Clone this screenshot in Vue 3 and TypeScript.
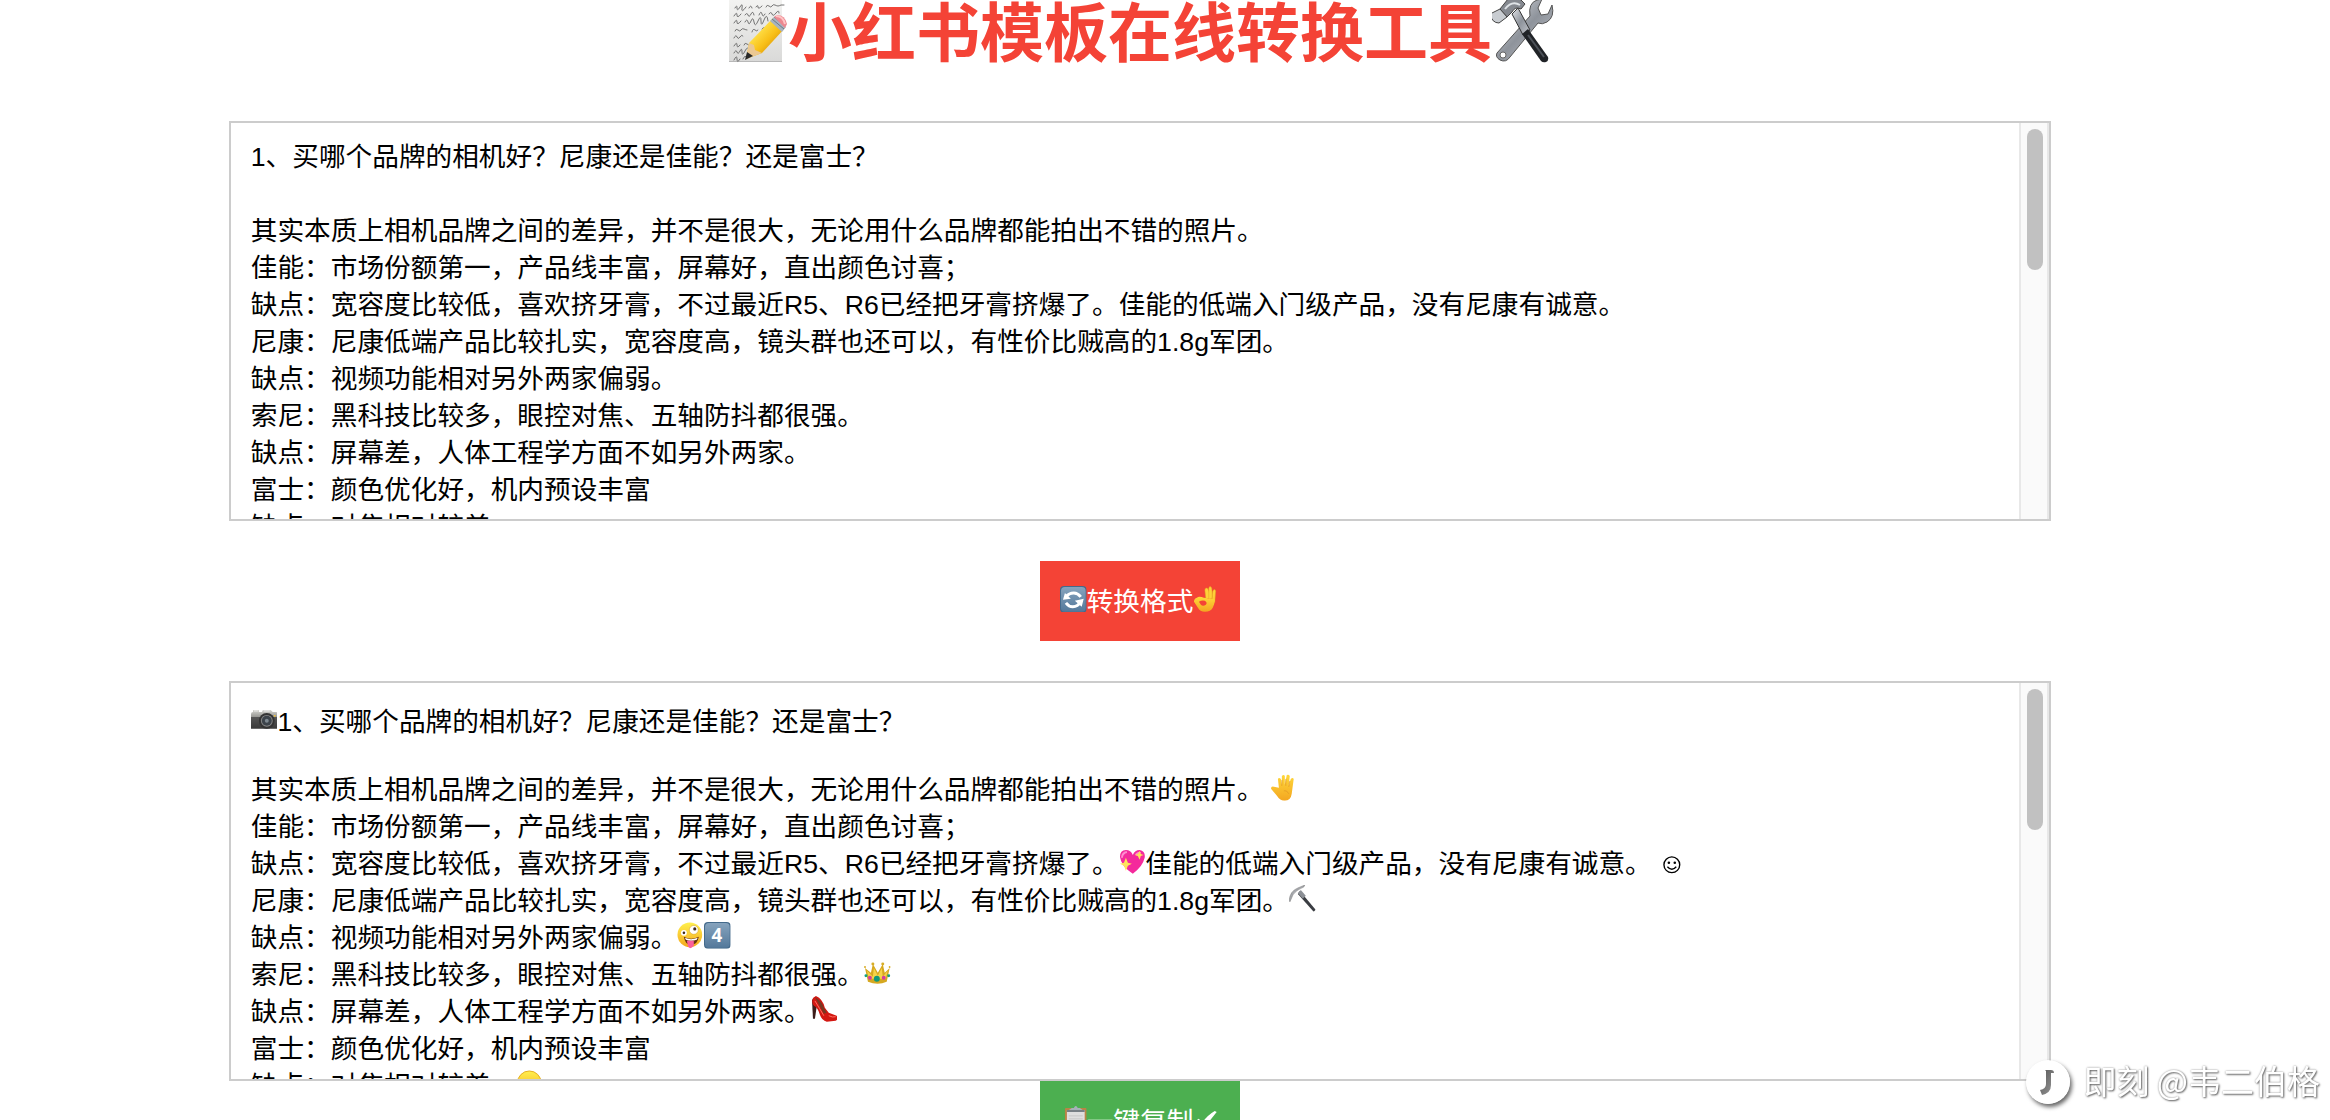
<script setup lang="ts">
import { computed, ref } from 'vue'

interface Part {
  icon: boolean
  value: string
}

const source = ref(
  [
    '1、买哪个品牌的相机好？尼康还是佳能？还是富士？',
    '',
    '其实本质上相机品牌之间的差异，并不是很大，无论用什么品牌都能拍出不错的照片。',
    '佳能：市场份额第一，产品线丰富，屏幕好，直出颜色讨喜；',
    '缺点：宽容度比较低，喜欢挤牙膏，不过最近R5、R6已经把牙膏挤爆了。佳能的低端入门级产品，没有尼康有诚意。',
    '尼康：尼康低端产品比较扎实，宽容度高，镜头群也还可以，有性价比贼高的1.8g军团。',
    '缺点：视频功能相对另外两家偏弱。',
    '索尼：黑科技比较多，眼控对焦、五轴防抖都很强。',
    '缺点：屏幕差，人体工程学方面不如另外两家。',
    '富士：颜色优化好，机内预设丰富',
    '缺点：对焦相对较差。',
  ].join('\n'),
)

const converted = ref([
  '[camera]1、买哪个品牌的相机好？尼康还是佳能？还是富士？',
  '',
  '其实本质上相机品牌之间的差异，并不是很大，无论用什么品牌都能拍出不错的照片。 [hand]',
  '佳能：市场份额第一，产品线丰富，屏幕好，直出颜色讨喜；',
  '缺点：宽容度比较低，喜欢挤牙膏，不过最近R5、R6已经把牙膏挤爆了。[heart]佳能的低端入门级产品，没有尼康有诚意。 [smile]',
  '尼康：尼康低端产品比较扎实，宽容度高，镜头群也还可以，有性价比贼高的1.8g军团。[pick]',
  '缺点：视频功能相对另外两家偏弱。[zany][four]',
  '索尼：黑科技比较多，眼控对焦、五轴防抖都很强。[crown]',
  '缺点：屏幕差，人体工程学方面不如另外两家。[heel]',
  '富士：颜色优化好，机内预设丰富',
  '缺点：对焦相对较差。[face]',
])

const lines = computed<Part[][]>(() =>
  converted.value.map((line) =>
    line
      .split(/(\[[a-z]+\])/)
      .filter((s) => s !== '')
      .map((s) => (/^\[[a-z]+\]$/.test(s) ? { icon: true, value: s.slice(1, -1) } : { icon: false, value: s })),
  ),
)

const marks = ['hand', 'heart', 'pick', 'zany', 'crown', 'heel', 'face']

function convert() {
  let n = 0
  converted.value = source.value
    .split('\n')
    .map((line) => (line.endsWith('。') ? `${line}[${marks[n++ % marks.length]}]` : line))
}

function copy() {
  const text = converted.value.join('\n').replace(/\[[a-z]+\]/g, '')
  navigator.clipboard?.writeText(text)
}
</script>

<template>
  <svg class="defs" aria-hidden="true">
    <defs>
      <linearGradient id="gKey" x1="0" y1="0" x2="0" y2="1">
        <stop offset="0" stop-color="#86a3bd" /><stop offset="1" stop-color="#54799b" />
      </linearGradient>
      <linearGradient id="gFace" x1="0" y1="0" x2="0" y2="1">
        <stop offset="0" stop-color="#fff04e" /><stop offset="1" stop-color="#f5a91c" />
      </linearGradient>
      <linearGradient id="gHand" x1="0" y1="0" x2="0" y2="1">
        <stop offset="0" stop-color="#ffd83a" /><stop offset="1" stop-color="#f3a621" />
      </linearGradient>
      <linearGradient id="gSteel" x1="0" y1="0" x2="1" y2="1">
        <stop offset="0" stop-color="#e4e6ea" /><stop offset="0.5" stop-color="#8e939b" /><stop offset="1" stop-color="#c4c7cd" />
      </linearGradient>
      <linearGradient id="gPencil" x1="0" y1="0" x2="1" y2="1">
        <stop offset="0.3" stop-color="#ffe14a" /><stop offset="0.55" stop-color="#f8bf17" /><stop offset="0.8" stop-color="#d08a08" />
      </linearGradient>
      <linearGradient id="gPaper" x1="0" y1="0" x2="0" y2="1">
        <stop offset="0" stop-color="#f4f4f2" /><stop offset="1" stop-color="#d9d9d8" />
      </linearGradient>
      <linearGradient id="gCamera" x1="0" y1="0" x2="0" y2="1">
        <stop offset="0" stop-color="#d6d6d1" /><stop offset="0.35" stop-color="#9a9a96" /><stop offset="0.4" stop-color="#555" /><stop offset="1" stop-color="#3a3a3a" />
      </linearGradient>
      <linearGradient id="gNote" x1="0" y1="0" x2="1" y2="1">
        <stop offset="0" stop-color="#555" /><stop offset="1" stop-color="#999" />
      </linearGradient>
    </defs>

    <symbol id="memo" viewBox="0 0 64 64">
      <path d="M5-2H58V62H5Z" fill="url(#gPaper)" />
      <path d="M5 61H58V62H5Z" fill="#b8b8b8" />
      <g fill="none" stroke="#666" stroke-width="0.9" stroke-linecap="round">
        <path d="M11 8q2-4 2 0t3-1 2 1 4-1m3 1q2-4 3 0m4-1q2-3 2 0t4-1m4 1q1-3 3-1t3 0 3-1 3 1 3-1h3" />
        <path d="M10 16q3-5 3-1t4-1m4 1q2-3 3 0t3-1 3 1m5 0q2-5 3-1t3 0m4 0q2-3 3 0t4-1 3 0" />
        <path d="M10 23q3-5 3-1t4-1m4 1q2-4 3 0t3-1 3 1 4-1 3 0 3-1 4 1m4 0q2-4 4 0" />
        <path d="M11 31q1-3 3-1t3 0 3-1 3 1m5 2q1-4 3-2t3 0m4-1q2-3 4 0" />
        <path d="M10 38q2-4 3-1t3 0 3-1" />
        <path d="M10 46q3-5 3-1t3 0m4 0q1-3 3-1t3 0 3-1" />
        <path d="M10 53q2-4 3-1t3-1 2 1 3-1 4 0" />
        <path d="M10 60q3-6 3-1t3 0m3 0q2-5 4-1" />
      </g>
      <path d="M22 59L25 43 49 18 61 28 38 53Z" fill="url(#gPencil)" />
      <path d="M22 59L25 43l5 2 1 5 7 3Z" fill="#ebc893" />
      <path d="M21 60l2-8 6 4Z" fill="#292929" />
      <path d="M46 21l4-4 12 10-4 5Z" fill="#a7b3bf" />
      <path d="M48 19l12 10M50 17l11 9" stroke="#6c7987" stroke-width="1" />
      <path d="M50 17l3-2q8 0 10 9l-2 4Z" fill="#ec8890" />
      <path d="M52 16q7 0 9 8" stroke="#ffc3c4" stroke-width="2" fill="none" />
    </symbol>

    <symbol id="tools" viewBox="0 0 64 64">
      <path d="M5 53L38 16Q36 3 45 0l5-1-4 9 3 7 7-1 4-9q3 12-5 17-5 3-9 1L18 57Q14 63 8 60 3 57 5 53Z" fill="url(#gSteel)" stroke="#555" stroke-width="1" />
      <circle cx="11" cy="55" r="3" fill="#fff" stroke="#666" />
      <path d="M20 14L26 8 38 30 31 35Z" fill="url(#gSteel)" stroke="#333" stroke-width="1" />
      <path d="M30 34l6-5 20 28q1 4-2 5-3 1-5-1Z" fill="#202327" />
      <path d="M36 35l16 22" stroke="#4c5158" stroke-width="2" />
      <path d="M8 9L16-1q9-5 17 5l-4 5q-6-3-9 3l-5 5Z" fill="#858990" stroke="#444" stroke-width="1" />
      <path d="M-2 14L8 9l7 8-8 6q-7 0-9-9Z" fill="#c8ccd1" stroke="#444" stroke-width="1" />
      <path d="M13 9q7-9 15-4" stroke="#dfe3e7" stroke-width="2" fill="none" />
    </symbol>

    <symbol id="refresh" viewBox="0 0 27 27">
      <rect width="27" height="27" rx="4" fill="#446a8b" />
      <rect x="1" y="1" width="25" height="25" rx="4" fill="url(#gKey)" />
      <path d="M6 11Q9 7 14 7q4 0 7 4M21 16q-3 5-8 5-4 0-7-4" fill="none" stroke="#fff" stroke-width="3" />
      <path d="M3 14l2-7 6 6ZM24 13l-2 8-7-6Z" fill="#fff" />
    </symbol>

    <symbol id="ok" viewBox="0 0 27 27">
      <path d="M13 13L12 4q0-2 2-2 1 0 2 3l2 7" fill="#ffd23a" stroke="#e0a020" stroke-width=".5" />
      <path d="M16 13L16 2q1-3 3 0l1 11M19 14l1-9q2-3 3 0l-1 12" fill="#ffd23a" stroke="#e0a020" stroke-width=".5" />
      <path d="M4 12q2-2 7 0l7 1 4 1q0 5-2 8-2 4-8 4-5 0-7-4L1 16q0-3 3-4Z" fill="url(#gHand)" />
      <path d="M6 16q3-2 6-1 3 2 1 4-3 2-5 0Z" fill="#f44336" />
    </symbol>

    <symbol id="camera" viewBox="0 0 27 27">
      <path d="M0 8q0-2 2-2V4h6v2h3l1-2h8l2 2h4l1 2v15H0Z" fill="url(#gCamera)" />
      <circle cx="16" cy="15" r="8" fill="#333" />
      <circle cx="16" cy="15" r="6" fill="#888" />
      <circle cx="16" cy="15" r="5" fill="#3c434a" />
      <circle cx="16" cy="15" r="2" fill="#7e8991" />
      <circle cx="24" cy="10" r="1" fill="#f2c033" />
      <path d="M3 5h4M13 5h6" stroke="#eee" />
    </symbol>

    <symbol id="hand" viewBox="0 0 27 27">
      <path d="M8 14L7 5q1-2 3 0l1 6 0-9q2-2 3 0v9l2-10q2-1 3 1l-1 10 2-7q2-2 3 0l-2 15q-1 7-7 7-5 0-8-5l-6-7q0-3 3-2Z" fill="url(#gHand)" />
      <path d="M11 6v6M15 5v7M19 7l-1 6M13 17q3-1 5 3" stroke="#df9423" fill="none" stroke-width=".7" />
    </symbol>

    <symbol id="heart" viewBox="0 0 27 27">
      <path d="M14 26Q2 18 1 9 1 2 7 2q5 0 7 5 2-5 7-5 6 1 5 8-2 9-12 16Z" fill="#f42a9c" />
      <path d="M3 10q0-5 5-6M17 7q2-3 5-2" stroke="#ff8bd0" stroke-width="2" fill="none" />
      <path d="M7 10l2 5 4 1-4 2-2 5-2-5-4-2 4-1ZM21 3l1 3 3 1-3 1-1 4-2-4-3-1 3-1Z" fill="#ffe45b" />
    </symbol>

    <symbol id="smile" viewBox="0 0 27 27">
      <circle cx="13" cy="17" r="8" fill="none" stroke="#000" stroke-width="1.4" />
      <circle cx="10" cy="15" r="1.3" /><circle cx="16" cy="15" r="1.3" />
      <path d="M8.500 19q4.500 5 9 0" fill="none" stroke="#000" stroke-width="1.4" />
    </symbol>

    <symbol id="pick" viewBox="0 0 27 27">
      <path d="M11 6L27 25l-2 2L9 9Z" fill="#3a3d42" />
      <path d="M9 8l3-3 5 6-3 3Z" fill="#8c9096" />
      <path d="M0 16Q1 6 9 3l7-3-1 2Q7 5 4 10L1 17Z" fill="#a5a8ad" stroke="#777" stroke-width=".5" />
    </symbol>

    <symbol id="zany" viewBox="0 0 27 27">
      <circle cx="13" cy="13" r="12.500" fill="url(#gFace)" />
      <path d="M7 15q7 4 15 0-1 8-8 8-6 0-7-8Z" fill="#6b3510" />
      <path d="M8 16q6 3 13 0l-1 2q-6 2-11 0Z" fill="#fff" />
      <path d="M10 19h7v5q-4 5-6 0Z" fill="#fb5f9b" />
      <circle cx="7" cy="11" r="3" fill="#fff" /><circle cx="7" cy="11" r="1.300" fill="#402a1a" />
      <circle cx="17" cy="8" r="4.500" fill="#fff" stroke="#d39b25" stroke-width=".5" /><circle cx="18" cy="7" r="1.600" fill="#402a1a" />
    </symbol>

    <symbol id="four" viewBox="0 0 27 27">
      <rect width="27" height="27" rx="4" fill="#446a8b" />
      <rect x="1" y="1" width="25" height="25" rx="4" fill="url(#gKey)" />
      <text x="13" y="20" text-anchor="middle" font-family="Open Sans, sans-serif" font-size="19" font-weight="700" fill="#fff">4</text>
    </symbol>

    <symbol id="crown" viewBox="0 0 27 27">
      <path d="M4 23L1 9l6 5 2-9 5 9 5-9 2 9 5-5-3 14q-9 4-19 0Z" fill="#d6a820" />
      <path d="M5 20L3 12l6 6 1-9 4 8 4-8 1 9 5-6-2 8" fill="#f6d348" />
      <circle cx="1" cy="8" r="1" fill="#d8ad27" /><circle cx="9" cy="5" r="1.500" fill="#d8ad27" /><circle cx="19" cy="5" r="1.500" fill="#d8ad27" /><circle cx="26" cy="8" r="1" fill="#d8ad27" />
      <circle cx="13" cy="20" r="3" fill="#10987a" />
      <circle cx="6" cy="19" r="2" fill="#d53b9d" /><circle cx="20" cy="19" r="2" fill="#d53b9d" />
      <circle cx="2" cy="17" r="1.500" fill="#15a07d" /><circle cx="25" cy="17" r="1.500" fill="#15a07d" />
    </symbol>

    <symbol id="heel" viewBox="0 0 27 27">
      <path d="M1 4L4 1l2 8-2 14H2Z" fill="#3d1d1a" />
      <path d="M2 2l3-2q7 3 9 12l4 5 8 3q2 4-1 5l-9 1q-5-1-7-7Q7 12 3 10 0 7 2 2Z" fill="#d31812" />
      <path d="M4 1q7 4 9 11l3 5-3 1Q8 9 4 1Z" fill="#7a3721" />
      <path d="M4 5q5 8 9 15M18 20q4 2 7 1" stroke="#ff7162" fill="none" />
    </symbol>

    <symbol id="face" viewBox="0 0 27 27">
      <circle cx="12.500" cy="13" r="12" fill="url(#gFace)" stroke="#e6ae22" />
      <path d="M8 12v3M17 12v3M8 20q5 3 9 0" stroke="#6b3510" stroke-width="2" fill="none" />
    </symbol>

    <symbol id="clipboard" viewBox="0 0 27 27">
      <rect x="5" y="2" width="22" height="26" rx="1" fill="#b88445" />
      <path d="M7 4h18v23H7Z" fill="#dedede" />
      <path d="M7 4h18v2H7Z" fill="#777f85" />
      <path d="M9 4l3-2h2q2-4 4 0h2l3 2Z" fill="#a6b1b8" />
      <path d="M9 10h14M9 13h14" stroke="#c6c6c6" />
    </symbol>

    <symbol id="check" viewBox="0 0 27 27">
      <path d="M1 16l5-3 3 4Q15 9 22 5l2 1Q17 14 11 24H7Z" fill="#fff" />
    </symbol>
  </svg>

  <main class="page">
    <h1 class="title">
      <svg class="emoji"><use href="#memo" /></svg><span>小红书模板在线转换工具</span><svg class="emoji"><use href="#tools" /></svg>
    </h1>

    <div class="box">
      <textarea v-model="source" class="field" aria-label="原文" spellcheck="false"></textarea>
      <div class="track"><div class="thumb"></div></div>
    </div>

    <button type="button" class="btn convert" @click="convert">
      <svg class="emoji"><use href="#refresh" /></svg><span>转换格式</span><svg class="emoji"><use href="#ok" /></svg>
    </button>

    <div class="box">
      <output class="field result" aria-label="转换结果">
        <span v-for="(line, i) in lines" :key="i" class="line">
          <template v-for="(part, j) in line" :key="j"><svg v-if="part.icon" class="emoji"><use :href="'#' + part.value" /></svg><template v-else>{{ part.value }}</template></template>
        </span>
      </output>
      <div class="track"><div class="thumb"></div></div>
    </div>

    <button type="button" class="btn copy" @click="copy">
      <svg class="emoji"><use href="#clipboard" /></svg><span>一键复制</span><svg class="emoji"><use href="#check" /></svg>
    </button>

    <div class="watermark">
      <svg class="badge" viewBox="0 0 44 44">
        <circle cx="22" cy="22" r="22" fill="#fff" />
        <path d="M19 10h6q3 0 3 3h-3v12q0 8-9 10l-2-5q6-1 6-6V11Z" fill="url(#gNote)" />
      </svg>
      <span>即刻 @韦二伯格</span>
    </div>
  </main>
</template>

<style>
body {
  margin: 0;
  background: #fff;
}
</style>

<style scoped>
.defs {
  position: absolute;
  width: 0;
  height: 0;
}

.page {
  position: relative;
  display: flex;
  flex-direction: column;
  align-items: center;
  box-sizing: border-box;
  height: 100vh;
  padding: 0 51px 0 1px;
  overflow: hidden;
  font-family: 'Liberation Sans', 'Noto Sans CJK SC', sans-serif;
  font-size: 20pt;
  color: #000;
}

.emoji {
  flex: none;
  width: 1em;
  height: 1em;
}

.title {
  display: flex;
  flex: none;
  align-items: flex-start;
  margin: 0 0 53px;
  font-size: 64px;
  line-height: 68px;
  font-weight: 700;
  color: #f44336;
}

.title .emoji {
  overflow: visible;
}

.box {
  display: flex;
  flex: none;
  box-sizing: border-box;
  width: 80%;
  height: 400px;
  border: 2px solid #ccc;
}

.field {
  flex: 1;
  box-sizing: border-box;
  min-width: 0;
  height: 100%;
  margin: 0;
  padding: 16px 20px 0;
  border: 0;
  outline: 0;
  overflow-y: scroll;
  scrollbar-width: none;
  resize: none;
  background: #fff;
  font: inherit;
  line-height: 37px;
  color: inherit;
}

.result {
  display: block;
  padding-top: 21px;
}

.line {
  display: block;
  min-height: 31px;
}

.line .emoji {
  vertical-align: -2px;
}

.track {
  flex: none;
  box-sizing: border-box;
  width: 30px;
  padding: 6px;
  border: solid #e8e8e8;
  border-width: 0 2px;
  background: #fafafa;
}

.thumb {
  width: 16px;
  height: 141px;
  border-radius: 8px;
  background: #c1c1c1;
}

.btn {
  display: flex;
  flex: none;
  align-items: center;
  justify-content: center;
  width: 200px;
  height: 80px;
  padding: 0 0 4px;
  border: 0;
  font: inherit;
  color: #fff;
  cursor: pointer;
}

.convert {
  margin: 40px 0;
  background: #f44336;
}

.copy {
  background: #4caf50;
}

.watermark {
  position: absolute;
  right: 10px;
  bottom: 12px;
  display: flex;
  align-items: center;
  gap: 13px;
  font-family: 'Noto Sans CJK SC', sans-serif;
  font-size: 33px;
  line-height: 48px;
  color: #fff;
  text-shadow: 1px 1px 2px #666, 0 0 2px #999;
}

.watermark span {
  padding-bottom: 4px;
}

.badge {
  width: 44px;
  height: 44px;
  border-radius: 50%;
  box-shadow: 2px 3px 4px #666;
}
</style>
